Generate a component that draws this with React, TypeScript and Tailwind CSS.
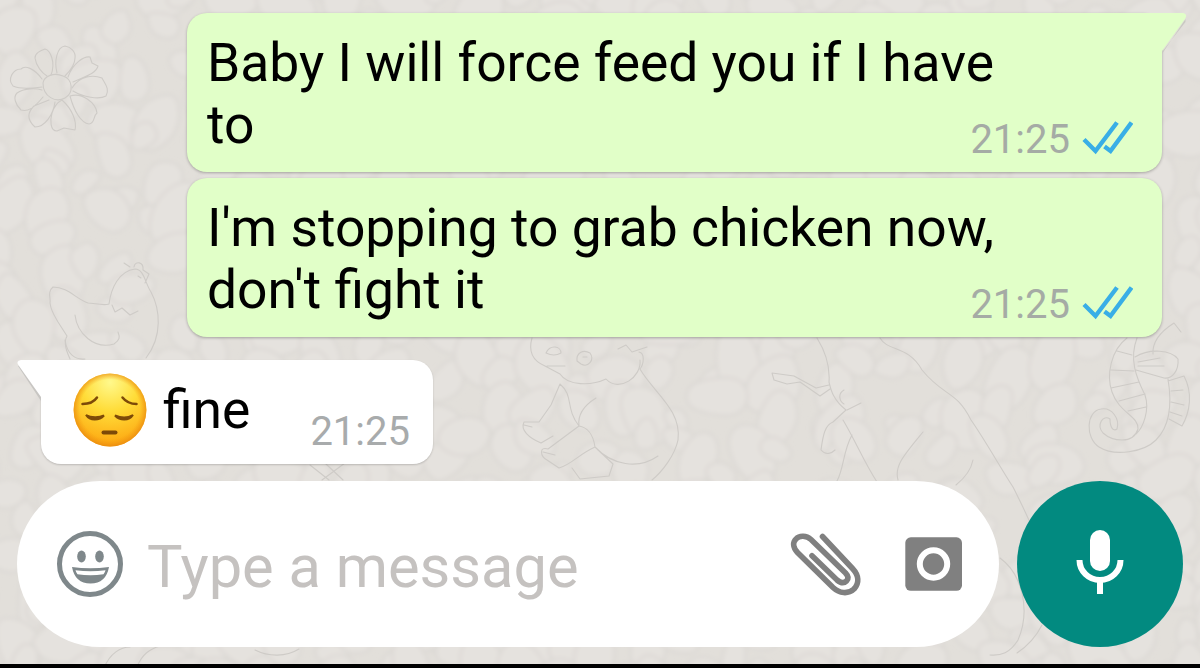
import React from 'react';

type Message = {
  id: number;
  lines: string[];
  time: string;
};

const SENT: Message[] = [
  { id: 1, lines: ['Baby I will force feed you if I have', 'to'], time: '21:25' },
  { id: 2, lines: ["I'm stopping to grab chicken now,", "don't fight it"], time: '21:25' },
];

// Jittered rows of rounded stones for the chat wallpaper
const noise = (n: number) => {
  const v = Math.sin(n * 127.1 + 11.7) * 43758.5453;
  return v - Math.floor(v);
};

const STONES = Array.from({ length: 19 * 32 }, (_, i) => {
  const col = i % 32;
  const row = Math.floor(i / 32);
  const cx = col * 40 - 10 + (row % 2) * 19 + (noise(i) - 0.5) * 38;
  const cy = row * 38 - 5 + (noise(i + 900) - 0.5) * 36;
  const r = 14 + noise(i + 300) * 17;
  const tilt = noise(i + 1700) * Math.PI;
  const points = Array.from({ length: 7 }, (_, k) => {
    const a = (k / 7) * Math.PI * 2;
    const d = r * (0.8 + noise(i * 7 + k) * 0.4);
    const x = Math.cos(a) * d * 1.2;
    const y = Math.sin(a) * d * 0.85;
    return [cx + x * Math.cos(tilt) - y * Math.sin(tilt), cy + x * Math.sin(tilt) + y * Math.cos(tilt)];
  });
  const mid = (k: number) => {
    const p = points[k % 7];
    const q = points[(k + 1) % 7];
    return `${((p[0] + q[0]) / 2).toFixed(1)} ${((p[1] + q[1]) / 2).toFixed(1)}`;
  };
  const curves = points.map((_, k) => {
    const p = points[(k + 1) % 7];
    return `Q${p[0].toFixed(1)} ${p[1].toFixed(1)} ${mid(k + 1)}`;
  });
  return `M${mid(0)}${curves.join('')}Z`;
});

function Wallpaper() {
  return (
    <svg className="absolute inset-0 w-full h-full" viewBox="0 0 1200 668" fill="none">
      <defs>
        <filter id="soft" x="0" y="0" width="1200" height="668" filterUnits="userSpaceOnUse">
          <feGaussianBlur stdDeviation="2.2" />
        </filter>
      </defs>
      <rect width="1200" height="668" fill="#e2dfda" />
      <g filter="url(#soft)" fill="#e5e2de" stroke="#dbd8d4" strokeWidth="2.2">
        {STONES.map((d, i) => (
          <path key={i} d={d} />
        ))}
      </g>
      <g stroke="#cecbc7" strokeWidth="1.1" strokeLinecap="round" strokeLinejoin="round">
        {/* Flower */}
        <path d="M43 83C44 76 54 72 63 76C73 79 74 93 65 98C56 103 43 97 43 83Z" />
        <path d="M42 79C34 68 25 65 21 69C13 69 7 79 13 86C22 90 34 88 42 87M51 75C56 62 50 50 45 49C40 51 35 53 35 58C36 66 42 73 47 76M57 73C54 61 57 47 65 46C71 47 76 52 75 58C75 65 69 72 65 76M68 77C73 63 84 56 90 57L92 63L98 66C96 74 84 77 73 82M72 88C80 75 94 75 102 78C105 84 110 89 106 96C99 100 83 97 73 91M70 96C82 92 96 103 97 113C93 116 95 124 89 124C81 123 74 111 70 96M62 100C72 109 77 121 75 130L64 128L57 131C50 131 50 120 52 113C54 107 58 102 62 100ZM55 102C53 115 45 127 35 127C26 119 28 112 34 106L49 100M43 97C34 108 28 112 21 110C15 104 13 97 17 93C24 88 36 88 42 90" />
        {/* Hen */}
        <path d="M88 303C76 299 68 287 53 287C47 292 51 298 50 303C51 311 54 315 58 322L67 336C63 343 67 352 70 359M88 303C94 303 103 306 109 304C111 288 119 271 135 269C144 269 145 283 151 292C160 309 163 336 146 358M75 315C77 333 94 350 114 344C120 340 120 337 118 332M130 267L124 263M134 267C135 260 144 262 143 270L149 274L145 283M112 305L115 312L122 308L130 315L138 311M138 276L141 278" />
        {/* Bear */}
        <path d="M532 338C528 352 533 361 545 366L560 374C568 386 591 386 606 379C619 393 642 377 640 360M546 353C550 344 561 346 561 353C556 356 550 355 546 353M547 366L565 366M577 361C576 353 583 349 590 353C595 360 588 368 581 364Z M583 357h4M618 349L626 345L632 352L647 347M639 352C645 353 644 364 640 369C653 392 682 410 678 440C675 455 662 472 652 480M560 384L551 405L539 422L524 422C520 430 529 438 541 443L553 436M560 384C574 396 565 408 579 426C577 412 588 403 596 398M579 426L548 449C539 446 540 456 547 460L559 468C571 465 579 454 595 447C593 433 586 427 579 426M595 447C612 465 638 470 658 456M572 468L580 479L609 476L613 464L597 449M524 425l8 2M543 452l12 3" />
        {/* Lizard and vine */}
        <path d="M817 338C827 354 830 368 829 382C831 390 833 400 846 410L833 422C825 425 823 435 821 450C826 456 832 453 835 450M847 410L861 403M829 385L816 388L794 376L772 373L774 380L787 384L800 382L820 396L830 389M843 420C855 440 864 462 877 482M852 435C843 451 844 468 837 481M880 338C888 352 908 345 922 370C944 397 956 390 971 420C985 440 1000 467 1013 487C1030 520 1040 545 1048 565M923 432C904 455 894 466 898 480M973 460C971 470 966 477 956 485M844 390c-7 4-4 12 0 14" />
        {/* Seahorse */}
        <path d="M1127 338C1111 350 1106 375 1112 392C1119 413 1139 416 1138 429C1133 445 1112 441 1103 433C1096 425 1103 414 1110 419C1110 427 1113 432 1117 429C1120 419 1112 407 1101 409C1086 411 1085 438 1099 447C1115 457 1144 452 1156 440C1173 423 1171 397 1168 379M1137 338C1129 359 1136 377 1145 395C1150 410 1143 428 1136 434M1117 351L1132 355M1111 370L1134 371M1111 388L1139 382M1119 401L1145 394M1128 411L1146 407M1135 357C1150 348 1171 350 1178 359C1179 371 1172 379 1164 378L1136 370M1138 362L1160 358M1138 366L1164 366M1153 354C1152 340 1163 330 1174 323L1181 332M1168 381L1184 376C1193 393 1190 412 1182 426L1169 419M1171 391L1183 390M1171 402L1184 405M1170 412L1182 416" />
        {/* Bits showing around the composer */}
        <path d="M65 340C67 354 75 360 85 359M104 668C110 653 121 647 130 647M137 667C142 654 150 649 160 646M255 650C269 657 286 657 299 649M1000 558C1022 574 1031 610 1018 640C1010 653 1001 656 990 655M1042 625C1036 637 1029 645 1017 653M310 465L329 480M326 464L343 480M345 463L322 480" />
      </g>
    </svg>
  );
}

function DoubleTick() {
  return (
    <svg className="w-[52px] h-[36px] mb-[3px]" viewBox="0 0 52 36" fill="none" stroke="#39aee6" strokeWidth="4.4">
      <path d="M3 19.5L14.5 31L36 2.5" />
      <path d="M23.5 26.5L29.5 31L50.5 2.5" />
    </svg>
  );
}

function SentBubble({ message, tail }: { message: Message; tail?: boolean }) {
  return (
    <div className="relative w-[975px] h-[159px] rounded-[20px] bg-[#e1ffc8] pl-[20px] pt-[18.5px] shadow-[0_1px_3px_rgba(0,0,0,0.28)]">
      {tail && (
        <svg className="absolute left-[950px] top-0 w-[54px] h-[46px]" viewBox="0 0 54 46">
          <path d="M25 39L48.5 9V6L25 41Z" fill="#c9c9c2" />
          <path d="M0 0H46Q51 1 48 6L25 38V46H0Z" fill="#e1ffc8" />
        </svg>
      )}
      {message.lines.map((line) => (
        <p key={line} className="text-[53.4px] leading-[62.5px] whitespace-nowrap text-black">{line}</p>
      ))}
      <div className="absolute right-[29px] bottom-[9px] flex items-center gap-[11px]">
        <span className="text-[40px] leading-[47px] text-[#a5aba5]">{message.time}</span>
        <DoubleTick />
      </div>
    </div>
  );
}

function PensiveFace() {
  return (
    <svg className="w-[74px] h-[74px] shrink-0" viewBox="0 0 74 74" fill="none">
      <defs>
        <radialGradient id="face" cx="0.5" cy="0.12" r="0.88">
          <stop offset="0" stopColor="#fff98c" />
          <stop offset="0.45" stopColor="#ffdc38" />
          <stop offset="1" stopColor="#fda50f" />
        </radialGradient>
        <radialGradient id="rim" cx="0.5" cy="0.49" r="0.51">
          <stop offset="0.8" stopColor="#f39a12" stopOpacity="0" />
          <stop offset="1" stopColor="#e98b10" stopOpacity="0.85" />
        </radialGradient>
      </defs>
      <circle cx="37" cy="37" r="36.4" fill="url(#face)" />
      <circle cx="37" cy="37" r="36.4" fill="url(#rim)" />
      <g stroke="#7d4a08" strokeLinecap="round">
        <path d="M9.5 31C16 31 21 29 24 24.5M49.5 24.5C53 29 57 31 63.5 31" strokeWidth="2.5" />
        <path d="M13 42C17 48 26 48 31 42.5C26 45 18 45 13 42ZM42 42.5C47 48 56 48 60 42C55 45 48 45 42 42.5Z" strokeWidth="2" fill="#7d4a08" />
        <path d="M30.5 59.5H42.5" strokeWidth="4" />
      </g>
    </svg>
  );
}

function SmileIcon() {
  return (
    <svg className="w-[68px] h-[68px]" viewBox="0 0 68 68" fill="none">
      <circle cx="34" cy="34" r="30.5" stroke="#7f888b" strokeWidth="5" />
      <ellipse cx="25.5" cy="26.5" rx="4.3" ry="6" fill="#7f888b" />
      <ellipse cx="43.5" cy="26.5" rx="4.3" ry="6" fill="#7f888b" />
      <path d="M16 37Q34 39.5 53 37Q50 53.5 34.5 53.5Q19 53.5 16 37Z" fill="#7f888b" />
      <path d="M19.5 40.3Q34.5 42 49.5 40.3Q49 42.5 47.5 44.3Q34.5 46 21.5 44.3Q20 42.5 19.5 40.3Z" fill="#fff" />
    </svg>
  );
}

function ClipIcon() {
  return (
    <svg className="w-[72px] h-[66px]" viewBox="0 0 72 66" fill="none" stroke="#808080" strokeWidth="5.6" strokeLinecap="round">
      <path d="M32.5 5.5L62.5 37.5C69 44.5 69.5 52 64 58C58 63.5 49.500 62.5 43 56.5L7.5 21.5C2.500 16 2.8 11 6 8C9.500 4 16.5 4.5 21 8.5L55.5 42C58.8 45.5 58.5 48 56.5 50C54 52.5 50.5 52 47 49L22 24.8" />
    </svg>
  );
}

function CameraIcon() {
  return (
    <svg className="w-[58px] h-[54px]" viewBox="0 0 58 54" fill="none">
      <rect x="0.3" y="0.3" width="56.7" height="53.5" rx="5.5" fill="#808080" />
      <circle cx="28.5" cy="27" r="13.7" stroke="#fff" strokeWidth="6" />
    </svg>
  );
}

function MicIcon() {
  return (
    <svg className="w-[48px] h-[64px]" viewBox="0 0 48 64" fill="none">
      <rect x="14" y="0" width="20" height="41" rx="10" fill="#fff" />
      <path d="M3.5 30C3.5 41 12.5 50 24 50C35.5 50 44.5 41 44.5 30M24 50V64" stroke="#fff" strokeWidth="6" />
    </svg>
  );
}

export default function App() {
  return (
    <div className="relative w-[1200px] h-[668px] overflow-hidden font-['Roboto',sans-serif]">
      <Wallpaper />
      <div className="relative h-[664px] flex flex-col pt-[13px]">
        {/* Sent messages */}
        <div className="flex flex-col items-end gap-[6px] pr-[38px]">
          {SENT.map((message, i) => (
            <SentBubble key={message.id} message={message} tail={i === 0} />
          ))}
        </div>

        {/* Reply */}
        <div className="relative mt-[23px] ml-[41px] w-[392px] h-[104px] rounded-[20px] bg-white flex items-center pl-[32px] pb-[4px] shadow-[0_1px_2px_rgba(0,0,0,0.18)]">
          <svg className="absolute -left-[26px] top-0 w-[52px] h-[46px]" viewBox="0 0 52 46">
            <path d="M3 6L26 41V36L5 5Z" fill="#c8c6c3" />
            <path d="M52 0H6Q0 1 4 6L26 37V46H52Z" fill="#fff" />
          </svg>
          <PensiveFace />
          <span className="ml-[16px] text-[53.4px] leading-[62px] text-black">fine</span>
          <span className="absolute right-[23px] bottom-[9px] text-[40px] leading-[47px] text-[#a8abac]">21:25</span>
        </div>

        {/* Composer */}
        <div className="mt-[17px] flex items-center gap-[18px] pl-[17px]">
          <div className="w-[982px] h-[166px] rounded-full bg-white flex items-center pl-[39px] pr-[36px]">
            <SmileIcon />
            <span className="ml-[23px] pt-[5px] flex-1 text-[59.6px] leading-[70px] text-[#c5c2c0]">Type a message</span>
            <ClipIcon />
            <div className="ml-[43px]">
              <CameraIcon />
            </div>
          </div>
          <button type="button" aria-label="Record voice message" className="w-[166px] h-[166px] pb-[4px] rounded-full bg-[#028a80] flex items-center justify-center">
            <MicIcon />
          </button>
        </div>
      </div>
      <div className="relative h-[4px] bg-black" />
    </div>
  );
}
